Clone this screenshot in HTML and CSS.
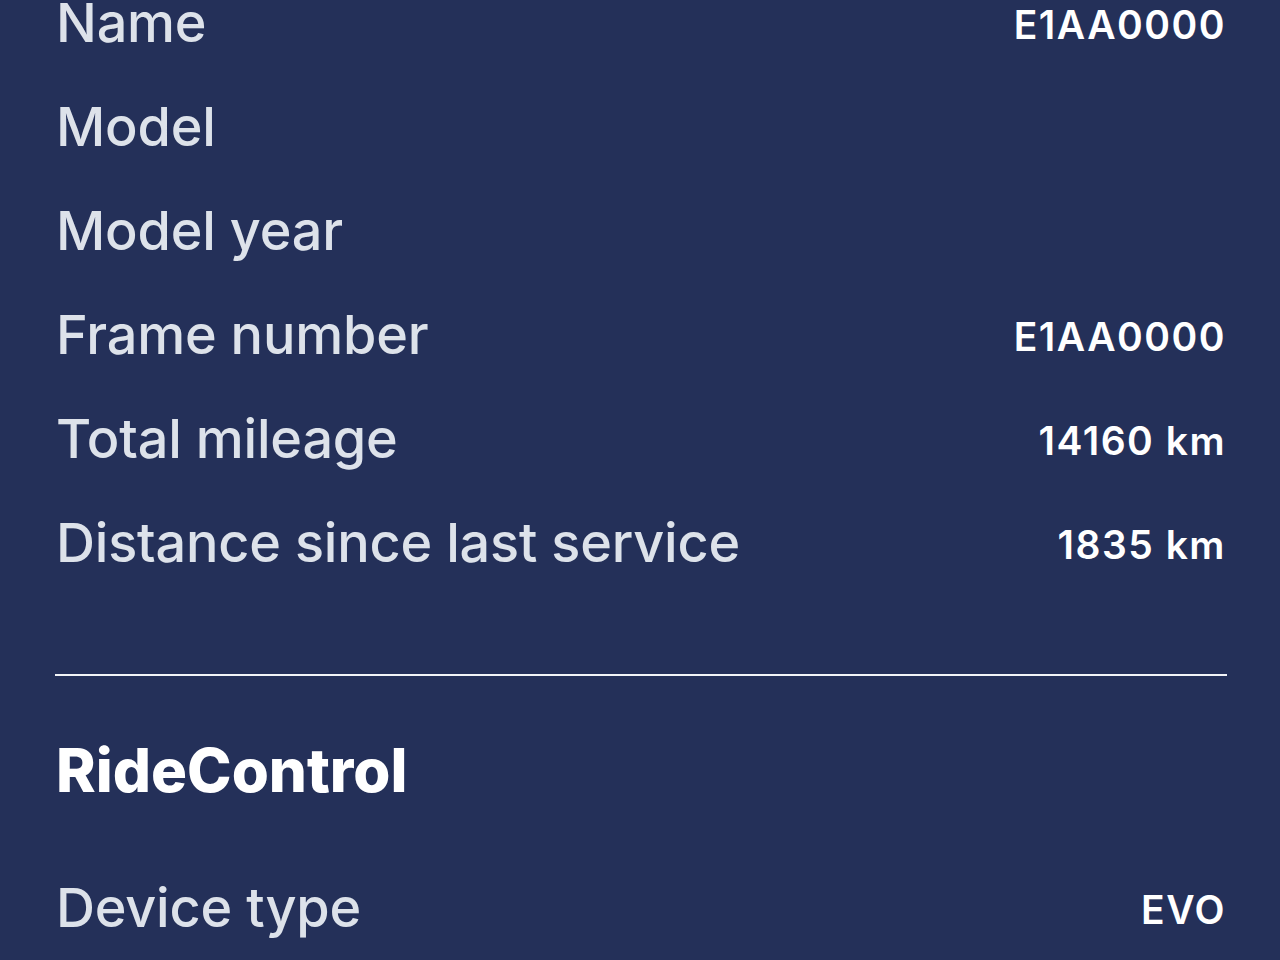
FILE: index.html
```html
<!DOCTYPE html>
<html lang="en">
<head>
<meta charset="utf-8">
<title>Bike details</title>
<link rel="stylesheet" href="styles.css">
</head>
<body>
<main class="page">
  <section class="group">
    <div class="row"><span class="label">Name</span><span class="value">E1AA0000</span></div>
    <div class="row"><span class="label">Model</span><span class="value"></span></div>
    <div class="row"><span class="label">Model year</span><span class="value"></span></div>
    <div class="row"><span class="label">Frame number</span><span class="value">E1AA0000</span></div>
    <div class="row"><span class="label">Total mileage</span><span class="value">14160 km</span></div>
    <div class="row"><span class="label">Distance since last service</span><span class="value">1835 km</span></div>
  </section>
  <hr class="divider">
  <h2 class="section-title">RideControl</h2>
  <section class="group group-rc">
    <div class="row"><span class="label">Device type</span><span class="value">EVO</span></div>
  </section>
</main>
</body>
</html>
```
FILE: styles.css
```css
html, body {
  margin: 0;
  padding: 0;
  background: #243059;
  height: 100%;
  overflow: hidden;
}
.page {
  padding: 0 54px 0 56px;
  font-family: Inter, "Noto Sans", sans-serif;
}
.group:first-child {
  margin-top: -29px;
}
.row {
  display: flex;
  justify-content: space-between;
  align-items: flex-start;
  height: 104px;
}
.label {
  font-size: 54px;
  line-height: 104px;
  color: #dde2ea;
  font-weight: 500;
  letter-spacing: -0.2px;
}
.value {
  font-size: 39px;
  line-height: 107px;
  color: #ffffff;
  font-weight: 600;
  letter-spacing: 1.5px;
}
.divider {
  border: 0;
  height: 2px;
  background: #f2f4f8;
  margin: 79px -1px 0 -1px;
}
.section-title {
  margin: 42px 0 0 0;
  font-size: 60px;
  font-weight: 800;
  color: #ffffff;
  line-height: 104px;
}
.group-rc {
  margin-top: 34px;
}
```
